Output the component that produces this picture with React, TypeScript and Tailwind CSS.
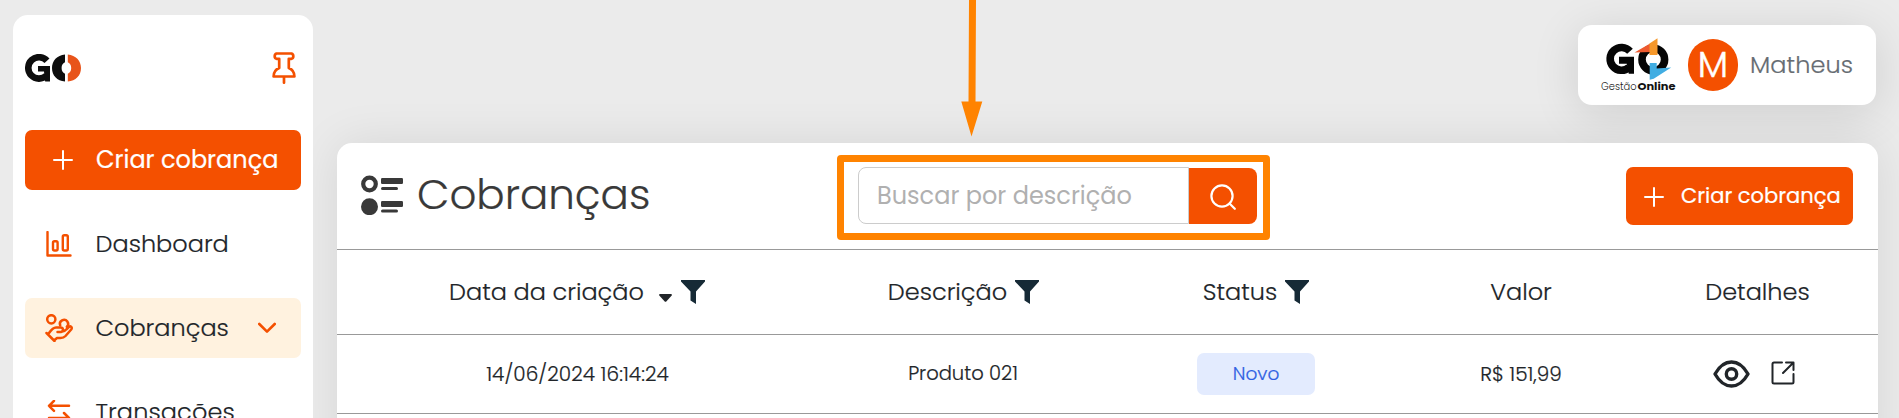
import React from 'react';

const F = "font-['Poppins','Inter',sans-serif] font-light [font-feature-settings:'cv11'] [-webkit-text-stroke:0.2px] whitespace-nowrap";

function Plus() {
  return (
    <svg className="size-5 shrink-0" viewBox="0 0 20 20" fill="none" stroke="#fff" strokeWidth="2" strokeLinecap="round">
      <path d="M10 1v18M1 10h18" />
    </svg>
  );
}

function Funnel() {
  return (
    <svg className="w-6 h-6 shrink-0" viewBox="0 0 24 24" fill="#162a36">
      <path d="M0 0h24v1.500L15 11.500V24L9.500 20.500V11.500L0 1.500z" />
    </svg>
  );
}

function SidebarLogo() {
  return (
    <svg className="w-14 h-7" viewBox="0 0 56 28" fill="none">
      <path d="M22 6.800A10.700 10.700 0 1 0 21.500 21.500" stroke="#0d0d0d" strokeWidth="6.600" />
      <path d="M13 12h12v15.500h-4.800l-.6-4L19 17.500h-6z" fill="#0d0d0d" />
      <path d="M40 .4v7.800c-2.300 1-3.400 3-3.400 5.800s1.100 4.800 3.400 5.800v7.800C32 26.800 27 21.500 27 14S32 1.200 40 .4z" fill="#0d0d0d" />
      <path d="M42.800 .4v7.800c2.300 1 3.400 3 3.400 5.800s-1.100 4.800-3.400 5.800v7.800c8-.8 13.200-6.100 13.200-13.600S50.800 1.200 42.800 .4z" fill="#e8541a" />
    </svg>
  );
}

function BrandLogo() {
  return (
    <svg className="w-[76px] h-[54px] shrink-0 overflow-visible" viewBox="0 0 76 54" fill="none">
      <path d="M29 13.200A11.400 11.400 0 1 0 28 29.500" stroke="#050505" strokeWidth="7.600" />
      <path d="M18 18.800h15v17h-5.200l-1-4-1-6H18z" fill="#050505" />
      <circle cx="52.300" cy="21.500" r="11.300" stroke="#050505" strokeWidth="7.600" />
      <path d="M33.500 14.500L50 5v9z" fill="#ee5a2f" />
      <path d="M48.500 5.500L56.500 .3V17h-8z" fill="#f6982a" />
      <path d="M48.700 25h7v5.500l14.500-1-17.500 11.300-4 1z" fill="#41ade2" />
      <text x="0" y="52" fontSize="11" fontFamily="Poppins, Inter, sans-serif" fontWeight="300" fill="#222" textLength="35.500" lengthAdjust="spacingAndGlyphs">Gestão</text>
      <text x="36.500" y="52" fontSize="11" fontFamily="Poppins, Inter, sans-serif" fontWeight="700" fill="#111" textLength="38" lengthAdjust="spacingAndGlyphs">Online</text>
    </svg>
  );
}

export default function App() {
  return (
    <div className={`relative flex h-[418px] w-[1899px] overflow-hidden bg-[#ebebeb] pl-[13px] text-[#212529] ${F}`}>
      <aside className="relative z-10 mt-[15px] h-[460px] w-[300px] shrink-0 rounded-[15px] bg-white px-3">
        <div className="flex h-[115px] items-start justify-between pt-[37px] pr-[5px]">
          <div className="pt-0.5"><SidebarLogo /></div>
          <svg className="h-8 w-6" viewBox="0 0 24 32" fill="none" stroke="#f45000" strokeWidth="2.700" strokeLinejoin="round" strokeLinecap="round">
            <path d="M4.500 1.500h15c2.400 .8 2.400 4.500 0 5.300h-2.700v9.200c3.700 1.500 5.600 4 5.600 8.500H1.600c0-4.500 1.900-7 5.600-8.500V6.800H4.500c-2.400-.8-2.400-4.500 0-5.300zM12 25v5.700" />
          </svg>
        </div>
        <button className="flex h-[60px] w-[276px] items-center rounded-[7px] bg-[#f45000] pl-7 text-2xl font-normal text-white">
          <Plus /><span className="ml-[23px]">Criar cobrança</span>
        </button>
        <nav className="mt-6 flex flex-col gap-6 text-2xl">
          <a className="flex h-[60px] items-center pl-[21px]">
            <svg className="h-[26px] w-[26px]" viewBox="0 0 26 26" fill="none" stroke="#f45000" strokeWidth="2.400" strokeLinecap="round" strokeLinejoin="round">
              <path d="M1.500 1v23.500H24.500" /><rect x="7" y="10.300" width="4.600" height="9.200" rx="1.500" /><rect x="16.800" y="4.200" width="5" height="15.300" rx="1.500" />
            </svg>
            <span className="ml-[23.500px]">Dashboard</span>
          </a>
          <a className="flex h-[60px] items-center rounded-[7px] bg-[#fff2df] pl-5">
            <svg className="h-7 w-7" viewBox="0 0 28 28" fill="none" stroke="#f45000" strokeWidth="2.500" strokeLinecap="round" strokeLinejoin="round">
              <circle cx="6.300" cy="5.300" r="4.100" /><path d="M15.200 11.500a4.100 4.100 0 1 1 6.600 1.500" />
              <path d="M1.500 19l8 8M3 20.500c2.500-3.500 4.500-7 8-7h4.500c3 0 3.500 4 .5 4.500h-3.500M16.500 17.800q3 0 5-2.500l2.300-2.300c1.800-1.500 3.800.5 2.400 2.500L20.500 22c-1.500 1.600-3 2-5 2H12l-3 2.500" />
            </svg>
            <span className="ml-[22.500px]">Cobranças</span>
            <svg className="ml-[29.500px] h-3 w-[18px]" viewBox="0 0 18 12" fill="none" stroke="#f45000" strokeWidth="2.600" strokeLinecap="round" strokeLinejoin="round"><path d="M1.300 2l7.700 7.700L16.700 2" /></svg>
          </a>
          <a className="flex h-[60px] items-center pl-[22px]">
            <svg className="h-6 w-6" viewBox="0 0 24 24" fill="none" stroke="#f45000" strokeWidth="2.500" strokeLinecap="round" strokeLinejoin="round"><path d="M22 5.800H2M7 .8L2 5.800l5 5M2 18h20M17 13l5 5-5 5" /></svg>
            <span className="ml-[24.500px] tracking-[0.1px]">Transações</span>
          </a>
        </nav>
      </aside>

      <div className="ml-6 flex w-[1541px] flex-col">
        <header className="mt-[25px] mr-0.5 flex h-20 w-[298px] shrink-0 items-center self-end rounded-[14px] bg-white pl-[23px] shadow-[0_8px_48px_rgba(0,0,0,0.12)]">
          <BrandLogo />
          <div className="ml-[11px] flex h-[52px] w-[50px] items-center justify-center rounded-full bg-[#f45000] text-[36px] font-light text-white [-webkit-text-stroke:0.5px]">M</div>
          <span className="ml-3 text-2xl tracking-[0.1px] text-[#666c72]">Matheus</span>
        </header>

        <main className="mt-[38px] h-[320px] shrink-0 rounded-[15px] bg-white shadow-[0_0_48px_rgba(0,0,0,0.09)]">
          <div className="flex h-[107px] items-start border-b border-[#999] pl-6">
            <svg className="mt-8 h-10 w-[42px]" viewBox="0 0 42 40" fill="#393939">
              <circle cx="8.500" cy="9" r="6.300" fill="none" stroke="#393939" strokeWidth="4.200" /><circle cx="8.500" cy="31.700" r="8.500" />
              <rect x="20" y="3" width="22" height="6" rx="1.200" /><rect x="20" y="12" width="17" height="3" rx="1.500" />
              <rect x="20" y="26" width="22" height="6" rx="1.200" /><rect x="20" y="34.500" width="17" height="3" rx="1.500" />
            </svg>
            <h1 className="mt-5 ml-[14px] w-[441px] text-[42px] leading-[64px] text-[#393939]">Cobranças</h1>
            <div className="mt-6 flex h-[58px] w-[399px]">
              <div className="flex h-[57px] w-[331px] items-center rounded-l-[8px] border border-[#ccc] pl-[18px] text-2xl font-normal text-[#b0b0b0] [-webkit-text-stroke:0px]">Buscar por descrição</div>
              <button className="mt-px flex h-14 w-[68px] items-center justify-center rounded-r-[8px] bg-[#f45000] pt-0.5">
                <svg className="h-[26px] w-[26px]" viewBox="0 0 26 26" fill="none" stroke="#fff" strokeWidth="2.200" strokeLinecap="round"><circle cx="12" cy="12" r="10.600" /><path d="M19.500 19.500l5.300 5.300" /></svg>
              </button>
            </div>
            <button className="mt-6 ml-[369px] flex h-[58px] w-[227px] items-center rounded-[7px] bg-[#f45000] pl-[18px] pt-0.5 text-[21px] font-normal text-white">
              <Plus /><span className="-mt-0.5 ml-[17px]">Criar cobrança</span>
            </button>
          </div>
          <div className="grid h-[85px] grid-cols-[481px_290px_296px_234px_240px] items-center border-b border-[#999] text-2xl">
            <div className="flex items-center justify-center">
              <span>Data da criação</span>
              <svg className="mt-[11px] ml-[15px] h-2 w-[13px]" viewBox="0 0 13 8" fill="#212529"><path d="M1 0h11q1.500.5.500 1.800L7.500 7.300q-1 1-2 0L.5 1.800Q-.5.500 1 0z" /></svg>
              <span className="mr-px ml-[9px]"><Funnel /></span>
            </div>
            <div className="flex items-center justify-center gap-2 pl-px"><span>Descrição</span><Funnel /></div>
            <div className="flex items-center justify-center gap-2"><span>Status</span><Funnel /></div>
            <div className="text-center">Valor</div>
            <div className="pr-px text-center">Detalhes</div>
          </div>
          <div className="grid h-[79px] grid-cols-[481px_290px_296px_234px_240px] items-center border-b border-[#999] pb-px text-center text-xl">
            <div className="tracking-[0.08px]">14/06/2024 16:14:24</div>
            <div className="text-[19.500px]">Produto 021</div>
            <div className="mx-auto mt-px flex h-[42px] w-[118px] items-center justify-center rounded-[7px] bg-[#e3ebfe] text-[18.500px] text-[#2f5fe3]">Novo</div>
            <div>R$ 151,99</div>
            <div className="flex items-center justify-center gap-[21px] pr-[8px]">
              <svg className="h-7 w-[37px]" viewBox="0 0 37 28" fill="none" stroke="#212529" strokeWidth="3.400" strokeLinejoin="round"><path d="M2 14C6.500 6 12 2 18.500 2S30.500 6 35 14c-4.500 8-10 12-16.500 12S6.500 22 2 14z" /><circle cx="18.500" cy="14" r="5.200" /></svg>
              <svg className="-mt-0.5 h-6 w-6" viewBox="0 0 24 24" fill="none" stroke="#212529" strokeWidth="2" strokeLinecap="round" strokeLinejoin="round"><path d="M11 1.500H3q-1.500 0-1.500 1.500v18q0 1.500 1.500 1.500h18q1.500 0 1.500-1.500v-8M15 1.500h7.500V9M22 2L12 12" /></svg>
            </div>
          </div>
        </main>
      </div>

      <svg className="pointer-events-none absolute top-0 left-[961px] h-[137px] w-[22px]" viewBox="0 0 22 137" fill="#ff8300"><path d="M8 0h7L14.500 101.500H21.300L10.500 136.500.3 101.500H7.500z" /></svg>
      <div className="pointer-events-none absolute top-[155px] left-[837px] h-[85px] w-[433px] rounded-[4px] border-[7px] border-[#ff8300]" />
    </div>
  );
}
